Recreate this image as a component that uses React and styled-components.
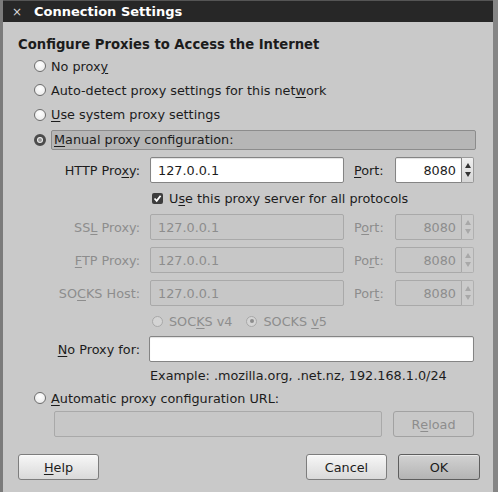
import React from 'react';
import styled, { createGlobalStyle } from 'styled-components';

const GlobalStyle = createGlobalStyle`
  html, body {
    margin: 0;
    padding: 0;
    background: #c9c9c9;
  }
  body {
    font-family: "DejaVu Sans", "Liberation Sans", sans-serif;
    font-size: 12.8px;
    color: #1c1c1c;
  }
`;

const Window = styled.div`
  width: 498px;
  height: 492px;
  box-sizing: border-box;
  display: flex;
  flex-direction: column;
  background: #c9c9c9;
  border-left: 3px solid #7b7b7b;
  border-right: 5px solid #858585;
  overflow: hidden;
`;

const TitleBar = styled.div`
  height: 22px;
  flex: none;
  display: flex;
  align-items: center;
  gap: 12px;
  padding-left: 9px;
  background: #272727;
  border-top: 1px solid #555;
  box-sizing: border-box;
  color: #fff;
`;

const CloseMark = styled.span`
  font-size: 12px;
  color: #d8d8d8;
  width: 10px;
  text-align: center;
`;

const Title = styled.span`
  font-weight: bold;
  font-size: 13px;
`;

const Body = styled.div`
  flex: 1;
  display: flex;
  flex-direction: column;
  padding: 12px 13px 0 15px;
`;

const Heading = styled.div`
  height: 20px;
  display: flex;
  align-items: center;
  font-weight: bold;
  font-size: 13.2px;
`;

const OptionRow = styled.div`
  height: ${p => p.$h || 24}px;
  display: flex;
  align-items: center;
  padding-left: 16px;
  gap: 5px;
`;

const Radio = styled.span`
  width: ${p => p.$size || 12}px;
  height: ${p => p.$size || 12}px;
  box-sizing: border-box;
  flex: none;
  border-radius: 50%;
  border: ${p => (p.$checked ? '3.5px solid #4c4c4c' : `1px solid ${p.$disabled ? '#a8a8a8' : '#6d6d6d'}`)};
  background: ${p => (p.$disabled ? '#d4d4d4' : 'radial-gradient(circle at 50% 35%, #ffffff, #e6e6e6)')};
  display: flex;
  align-items: center;
  justify-content: center;
`;

const RadioDot = styled.span`
  width: 4px;
  height: 4px;
  border-radius: 50%;
  background: ${p => (p.$disabled ? '#8d8d8d' : '#9a9a9a')};
`;

const HoverBox = styled.div`
  flex: 1;
  height: 20px;
  margin-right: 4px;
  display: flex;
  align-items: center;
  padding-left: 2px;
  box-sizing: border-box;
  background: #b6b6b6;
  border: 1px solid #8c8c8c;
  border-radius: 2px;
`;

const Section = styled.div`
  padding-left: 36px;
  padding-right: 6px;
  display: flex;
  flex-direction: column;
`;

const ProxyGrid = styled.div`
  display: grid;
  grid-template-columns: 86px 194px 31px 79px;
  column-gap: 10px;
  row-gap: ${p => p.$rowGap || 0}px;
  align-items: center;
`;

const Label = styled.span`
  text-align: ${p => (p.$left ? 'left' : 'right')};
  white-space: nowrap;
  color: ${p => (p.$disabled ? '#8d8d8d' : '#1c1c1c')};
  width: ${p => (p.$w ? `${p.$w}px` : 'auto')};
  flex: none;
`;

const Input = styled.div`
  height: 26px;
  box-sizing: border-box;
  display: flex;
  align-items: center;
  justify-content: ${p => (p.$right ? 'flex-end' : 'flex-start')};
  padding: 0 7px;
  border: 1px solid ${p => (p.$disabled ? '#a9a9a9' : '#848484')};
  border-radius: 2px;
  background: ${p => (p.$disabled ? '#c7c7c7' : '#fff')};
  color: ${p => (p.$disabled ? '#8d8d8d' : '#1c1c1c')};
  box-shadow: ${p => (p.$disabled ? 'none' : 'inset 0 1px 1px rgba(0,0,0,0.12)')};
  flex: ${p => (p.$grow ? 1 : 'none')};
  width: ${p => (p.$w ? `${p.$w}px` : 'auto')};
`;

const SpinWrap = styled.div`
  display: flex;
  height: 26px;
`;

const SpinField = styled(Input)`
  flex: 1;
  border-radius: 2px 0 0 2px;
  padding-right: 5px;
`;

const SpinButtons = styled.div`
  width: 12px;
  box-sizing: border-box;
  display: flex;
  flex-direction: column;
  align-items: center;
  justify-content: space-around;
  padding: 3px 0;
  border: 1px solid ${p => (p.$disabled ? '#b0b0b0' : '#9a9a9a')};
  border-left: none;
  border-radius: 0 2px 2px 0;
  background: ${p => (p.$disabled ? '#cbcbcb' : 'linear-gradient(#f0f0f0, #d6d6d6)')};
  color: ${p => (p.$disabled ? '#a8a8a8' : '#333')};
`;

const Row = styled.div`
  height: ${p => p.$h}px;
  display: flex;
  align-items: center;
  gap: ${p => p.$gap || 0}px;
  padding-left: ${p => p.$pl || 0}px;
`;

const Check = styled.span`
  width: 11px;
  height: 11px;
  flex: none;
  border-radius: 2px;
  background: #3d3d3d;
  display: flex;
  align-items: center;
  justify-content: center;
`;

const Hint = styled.div`
  height: 26px;
  display: flex;
  align-items: center;
  padding-left: 132px;
`;

const Button = styled.div`
  width: ${p => p.$w || 81}px;
  height: 26px;
  box-sizing: border-box;
  display: flex;
  align-items: center;
  justify-content: center;
  border-radius: 3px;
  border: 1px solid ${p => (p.$disabled ? '#a2a2a2' : p.$default ? '#5e5e5e' : '#7d7d7d')};
  color: ${p => (p.$disabled ? '#8d8d8d' : '#1c1c1c')};
  background: ${p =>
    p.$disabled
      ? '#c8c8c8'
      : p.$default
      ? 'linear-gradient(#d2d2d2, #b4b4b4)'
      : 'linear-gradient(#f7f7f7, #d9d9d9)'};
  box-shadow: ${p => (p.$disabled ? 'none' : 'inset 0 1px 0 rgba(255,255,255,0.5)')};
`;

const Footer = styled.div`
  height: 26px;
  margin-top: 14px;
  display: flex;
  align-items: center;
  gap: 11px;
`;

const Spacer = styled.div`
  flex: 1;
`;

const U = styled.span`
  text-decoration: underline;
  text-underline-offset: 2px;
`;

const Arrow = ({ up }) => (
  <svg width="6" height="5" viewBox="0 0 6 5">
    <path d={up ? 'M3 0 L6 5 L0 5 Z' : 'M0 0 L6 0 L3 5 Z'} fill="currentColor" />
  </svg>
);

const PortSpin = ({ disabled }) => (
  <SpinWrap>
    <SpinField $disabled={disabled} $right>8080</SpinField>
    <SpinButtons $disabled={disabled}>
      <Arrow up />
      <Arrow />
    </SpinButtons>
  </SpinWrap>
);

const proxies = [
  { label: <>SS<U>L</U> Proxy:</>, port: <>P<U>o</U>rt:</> },
  { label: <><U>F</U>TP Proxy:</>, port: <>Po<U>r</U>t:</> },
  { label: <>SO<U>C</U>KS Host:</>, port: <>Por<U>t</U>:</> },
];

export default function App() {
  return (
    <>
      <GlobalStyle />
      <Window>
        <TitleBar>
          <CloseMark>×</CloseMark>
          <Title>Connection Settings</Title>
        </TitleBar>
        <Body>
          <Heading>Configure Proxies to Access the Internet</Heading>
          <OptionRow $h={24}>
            <Radio />
            <span>No prox<U>y</U></span>
          </OptionRow>
          <OptionRow $h={24}>
            <Radio />
            <span>Auto-detect proxy settings for this net<U>w</U>ork</span>
          </OptionRow>
          <OptionRow $h={25}>
            <Radio />
            <span><U>U</U>se system proxy settings</span>
          </OptionRow>
          <OptionRow $h={25}>
            <Radio $checked><RadioDot /></Radio>
            <HoverBox>
              <span><U>M</U>anual proxy configuration:</span>
            </HoverBox>
          </OptionRow>

          <Section>
            <Row $h={5} />
            <ProxyGrid>
              <Label>HTTP Pro<U>x</U>y:</Label>
              <Input>127.0.0.1</Input>
              <Label $left><U>P</U>ort:</Label>
              <PortSpin />
            </ProxyGrid>
            <Row $h={31} $gap={6} $pl={98}>
              <Check>
                <svg width="9" height="9" viewBox="0 0 9 9">
                  <path d="M1.5 4.5 L3.7 6.8 L7.6 1.8" stroke="#fff" strokeWidth="1.8" fill="none" />
                </svg>
              </Check>
              <span>U<U>s</U>e this proxy server for all protocols</span>
            </Row>
            <ProxyGrid $rowGap={7}>
              {proxies.map((p, i) => (
                <React.Fragment key={i}>
                  <Label $disabled>{p.label}</Label>
                  <Input $disabled>127.0.0.1</Input>
                  <Label $disabled $left>{p.port}</Label>
                  <PortSpin disabled />
                </React.Fragment>
              ))}
            </ProxyGrid>
            <Row $h={30} $gap={6} $pl={98}>
              <Radio $disabled $size={11} />
              <Label $disabled>SOC<U>K</U>S v4</Label>
              <Radio $disabled $size={11} style={{ marginLeft: 8 }}><RadioDot $disabled /></Radio>
              <Label $disabled>SOCKS <U>v</U>5</Label>
            </Row>
            <Row $h={26} $gap={9}>
              <Label $w={86}><U>N</U>o Proxy for:</Label>
              <Input $grow />
            </Row>
          </Section>
          <Hint>Example: .mozilla.org, .net.nz, 192.168.1.0/24</Hint>
          <OptionRow $h={20}>
            <Radio />
            <span><U>A</U>utomatic proxy configuration URL:</span>
          </OptionRow>
          <Section>
            <Row $h={32} $gap={11}>
              <Input $disabled $w={328} />
              <Button $disabled>R<U>e</U>load</Button>
            </Row>
          </Section>
          <Footer>
            <Button><U>H</U>elp</Button>
            <Spacer />
            <Button>Cancel</Button>
            <Button $default $w={82}>OK</Button>
          </Footer>
        </Body>
      </Window>
    </>
  );
}
